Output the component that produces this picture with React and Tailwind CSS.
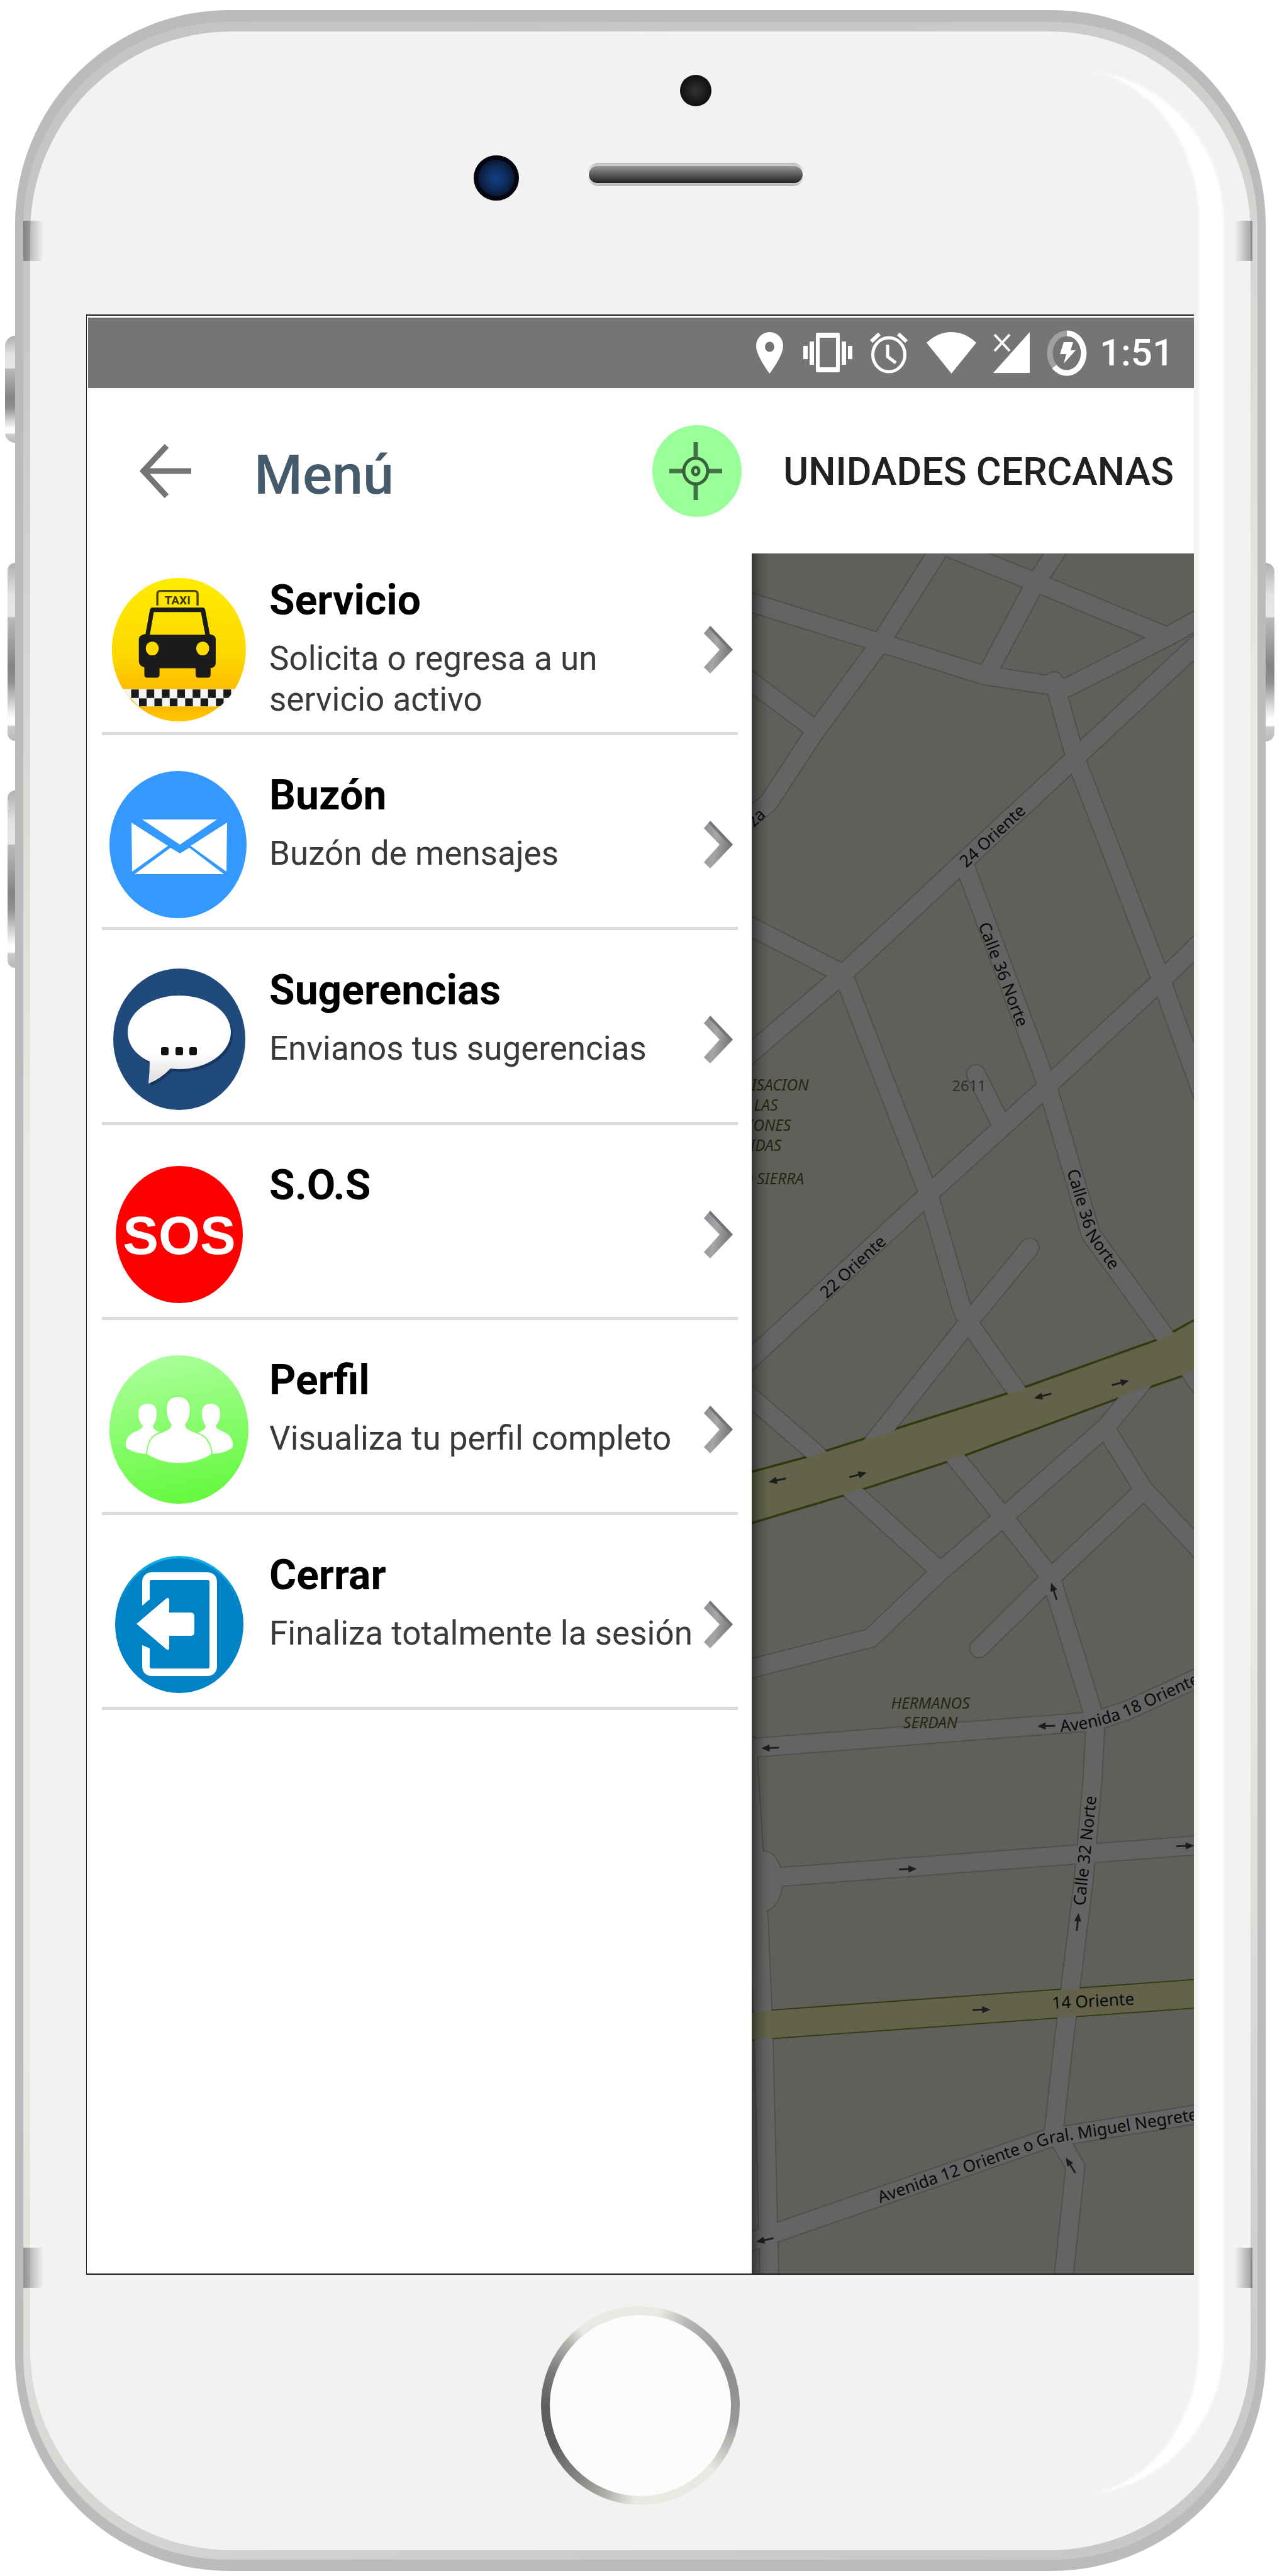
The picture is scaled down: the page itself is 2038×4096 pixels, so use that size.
import React from 'react';

const KEY_GRADIENT =
  'bg-[linear-gradient(180deg,#aeb1b0_0%,#e3e3e3_18%,#e7e7e8_30%,#b8babb_31%,#828485_58%,#8f908f_67%,#dededd_81%,#fdfdfb_87%,#fdfdfb_91%,#c9cccb_92%,#b8bab9_100%)]';

function SideKey({ className }) {
  return <span aria-hidden="true" className={`absolute ${KEY_GRADIENT} ${className}`} />;
}

/* ---------- status bar ---------- */

function PinIcon() {
  return (
    <svg width="48" height="66" viewBox="0 0 48 66" fill="#fff" fillRule="evenodd">
      <path d="M21.5 66C21.5 66 0 38 0 22A21.5 22 0 0 1 43 22C43 38 21.5 66 21.5 66ZM21.5 15.5a7.5 8 0 1 0 0 16a7.5 8 0 1 0 0-16Z" />
    </svg>
  );
}

function VibrateIcon() {
  return (
    <svg width="78" height="64" viewBox="0 0 78 64" fill="#fff">
      <rect x="0" y="21" width="7" height="21" />
      <rect x="10" y="14" width="7" height="37" />
      <path fillRule="evenodd" d="M22 0H56Q58 0 58 3V60Q58 63 56 63H22Q20 63 20 60V3Q20 0 22 0ZM26 8V55H52V8Z" />
      <rect x="61" y="14" width="7" height="37" />
      <rect x="71" y="21" width="7" height="21" />
    </svg>
  );
}

function AlarmIcon() {
  return (
    <svg width="64" height="66" viewBox="-2 0 64 66" fill="none" stroke="#fff">
      <ellipse cx="29" cy="36" rx="25.5" ry="27" strokeWidth="5" />
      <path d="M27 20V39L40 49" strokeWidth="5" />
      <path d="M1 15L14 3M44 3L57 15" strokeWidth="6" />
    </svg>
  );
}

function WifiIcon() {
  return (
    <svg width="79" height="66" viewBox="0 0 79 66" fill="#fff">
      <path d="M39.5 66L0 17Q18 0 39.5 0T79 17Z" />
    </svg>
  );
}

function SignalIcon() {
  return (
    <svg width="58" height="66" viewBox="0 0 58 66">
      <path d="M0 65L58 0V65Z" fill="#fff" />
      <path d="M0 2H28V30L24 38Z" fill="#757575" />
      <path d="M2 4L26 30M26 4L2 30" stroke="#fff" strokeWidth="4" />
    </svg>
  );
}

function BatteryIcon() {
  return (
    <svg width="64" height="73" viewBox="0 0 64 73" fill="none">
      <ellipse cx="32" cy="36.5" rx="27" ry="31.5" stroke="#a1a1a1" strokeWidth="9" />
      <path d="M32 5A27 31.5 0 1 1 12 58" stroke="#fff" strokeWidth="9" />
      <path d="M27 19H42L38 32H46L27 53L31 38H21Z" fill="#fff" />
    </svg>
  );
}

function StatusBar() {
  return (
    <div className="flex h-28 items-center justify-end gap-5 bg-[#757575] pr-8">
      <div className="flex items-center gap-[27px]">
        <PinIcon />
        <VibrateIcon />
        <AlarmIcon />
        <WifiIcon />
        <SignalIcon />
        <BatteryIcon />
      </div>
      <time className="text-[60px] leading-none font-medium text-white">1:51</time>
    </div>
  );
}

/* ---------- header ---------- */

function Header() {
  return (
    <header className="flex h-[263px] items-center bg-white pr-8 pl-[82px]">
      <button type="button" aria-label="Volver" className="shrink-0">
        <svg width="82" height="86" viewBox="0 0 82 86" fill="none" stroke="#757575" strokeWidth="9">
          <path d="M82 43H8M43 3L6 43L43 83" />
        </svg>
      </button>
      <h1 className="ml-[100px] pt-3 text-[88px] leading-none font-medium text-[#455a6b]">Menú</h1>
      <button type="button" className="ml-auto flex items-center gap-[66px] text-[#212121]">
        <svg width="142" height="146" viewBox="0 0 142 146" fill="none" stroke="#000" strokeOpacity="0.62">
          <ellipse cx="71" cy="73" rx="71" ry="73" fill="#99ff99" stroke="none" />
          <ellipse cx="69" cy="73" rx="19" ry="20.5" strokeWidth="5" />
          <path d="M27 73H48M90 73H111M69 27V50M69 96V119" strokeWidth="7" strokeOpacity="0.55" />
          <ellipse cx="69" cy="73" rx="5" ry="6" strokeWidth="5" />
        </svg>
        <span className="pt-1 text-[61px] leading-none font-medium">UNIDADES CERCANAS</span>
      </button>
    </header>
  );
}

/* ---------- menu icons ---------- */

function TaxiIcon() {
  const cells = [0, 1, 2, 3, 4, 5, 6];
  return (
    <svg width="220" height="236" viewBox="43 35 702 750">
      <defs>
        <linearGradient id="taxi-bg" x1="0" y1="0" x2="0" y2="1">
          <stop offset="0" stopColor="#ffec00" />
          <stop offset="0.55" stopColor="#fdd800" />
          <stop offset="0.78" stopColor="#fdbb00" />
          <stop offset="0.88" stopColor="#ffb400" />
          <stop offset="1" stopColor="#ffc800" />
        </linearGradient>
        <clipPath id="taxi-clip">
          <ellipse cx="395" cy="410" rx="340" ry="364" />
        </clipPath>
      </defs>
      <ellipse cx="395" cy="410" rx="340" ry="364" fill="url(#taxi-bg)" />
      <g clipPath="url(#taxi-clip)">
        <path d="M43 610H740V655H660V698H190L150 655H43Z" fill="#f4f4f4" />
        {cells.map((i) => (
          <rect key={`a${i}`} x={153 + i * 78} y="612" width="39" height="43" fill="#1a1a1a" />
        ))}
        {cells.slice(0, 6).map((i) => (
          <rect key={`b${i}`} x={193 + i * 78} y="657" width="39" height="40" fill="#1a1a1a" />
        ))}
      </g>
      <path d="M286 186V128Q286 112 302 112H474Q490 112 490 128V186" fill="none" stroke="#4e4a08" strokeWidth="11" />
      <text x="388" y="179" textAnchor="middle" fontFamily="Roboto, sans-serif" fontWeight="700" fontSize="61" fill="#3a3808">TAXI</text>
      <path
        fill="#1a1b1a"
        fillRule="evenodd"
        d="M262 196H516Q526 196 529 208L552 332Q582 336 582 356V480Q580 500 556 504V536Q556 552 542 552H494Q480 552 480 536V504H297V536Q297 552 283 552H234Q220 552 220 536V500Q194 494 192 470V356Q192 336 226 330L248 208Q251 196 262 196ZM268 219L248 334H529L507 219Z"
      />
      <ellipse cx="260" cy="404" rx="33" ry="35" fill="#fdda00" />
      <ellipse cx="516" cy="404" rx="33" ry="35" fill="#fdda00" />
    </svg>
  );
}

function MailIcon() {
  return (
    <svg width="220" height="236" viewBox="0 0 220 236">
      <ellipse cx="109" cy="118" rx="109" ry="117" fill="#3399ff" />
      <g fill="#fff">
        <path d="M52 78H171L112 118Z" />
        <path d="M35 83L93 120L36 161Z" />
        <path d="M187 83L129 120L186 161Z" />
        <path d="M40 165L97 123L112 132L127 123L182 165Z" />
      </g>
    </svg>
  );
}

function ChatIcon() {
  const bubble =
    'M111 48C157 48 193 74 193 106S157 165 111 165Q104 165 97 164Q82 180 62 188Q64 170 64 153C42 143 29 126 29 106C29 74 66 48 111 48Z';
  return (
    <svg width="220" height="236" viewBox="0 0 220 236">
      <defs>
        <linearGradient id="bubble" x1="0" y1="0" x2="0" y2="1">
          <stop offset="0.65" stopColor="#ffffff" />
          <stop offset="1" stopColor="#dcdcdc" />
        </linearGradient>
      </defs>
      <ellipse cx="111" cy="117.5" rx="105" ry="112.5" fill="#20497c" />
      <path d={bubble} transform="translate(3 4)" fill="#0d2445" opacity="0.5" />
      <path d={bubble} fill="url(#bubble)" />
      <g fill="#111">
        <rect x="82" y="130" width="12" height="13" rx="3" />
        <rect x="105" y="130" width="12" height="13" rx="3" />
        <rect x="127" y="130" width="12" height="13" rx="3" />
      </g>
    </svg>
  );
}

function SosIcon() {
  return (
    <svg width="220" height="236" viewBox="0 0 220 236">
      <ellipse cx="111" cy="118" rx="101" ry="109" fill="#ff0000" />
      <text x="111" y="149" textAnchor="middle" fontFamily="'Liberation Sans', sans-serif" fontWeight="700" fontSize="85" fill="#fff">SOS</text>
    </svg>
  );
}

function PeopleIcon() {
  return (
    <svg width="222" height="236" viewBox="0 0 222 236">
      <defs>
        <linearGradient id="people-bg" x1="0.4" y1="0" x2="0.6" y2="1">
          <stop offset="0" stopColor="#aaff99" />
          <stop offset="1" stopColor="#64f93e" />
        </linearGradient>
      </defs>
      <ellipse cx="110.5" cy="118" rx="110.5" ry="118" fill="url(#people-bg)" />
      <g fill="#fff">
        <path d="M61 77C71 77 75 83 75 92C75 102 72 107 69 112C69 117 74 120 83 124Q62 134 58 157Q40 156 28 148C23 144 27 132 32 127C38 121 52 119 53 112C49 107 46 102 46 92C46 83 51 77 61 77Z" />
        <path d="M161 77C171 77 176 83 176 92C176 102 173 107 169 112C170 119 184 121 190 127C195 132 199 144 194 148Q182 156 164 157Q160 134 139 124C148 120 153 117 153 112C150 107 147 102 147 92C147 83 151 77 161 77Z" />
      </g>
      <path
        d="M109 66C122 66 128 74 128 87C127 99 125 104 120 110C121 119 132 121 143 126C155 131 161 143 162 157Q140 171 111 171Q82 171 60 157C61 143 65 131 76 126C87 121 98 119 99 110C94 104 92 99 91 87C90 74 97 66 109 66Z"
        fill="#fff"
        stroke="#86fb69"
        strokeWidth="4"
        paintOrder="stroke"
      />
    </svg>
  );
}

function ExitIcon() {
  return (
    <svg width="220" height="236" viewBox="0 0 220 236">
      <defs>
        <linearGradient id="exit-edge" x1="0" y1="0" x2="0" y2="1">
          <stop offset="0" stopColor="#12b4e8" />
          <stop offset="0.35" stopColor="#0082c6" />
        </linearGradient>
      </defs>
      <ellipse cx="111" cy="118" rx="102" ry="109" fill="url(#exit-edge)" />
      <ellipse cx="111" cy="119" rx="99" ry="106" fill="#0082c6" />
      <path d="M58 88V51Q58 41 68 41H155Q165 41 165 51V184Q165 194 155 194H68Q58 194 58 184V146" fill="none" stroke="#fff" strokeWidth="12" />
      <path d="M50 90L64 78V92L50 102ZM50 134V150L64 156V144Z" fill="#0082c6" />
      <path d="M43 117L90 77Q95 74 95 80V99H129Q135 99 135 105V130Q135 136 129 136H95V154Q95 161 90 157Z" fill="#fff" />
    </svg>
  );
}

function Chevron() {
  return (
    <svg className="shrink-0" width="46" height="76" viewBox="0 0 46 76">
      <defs>
        <linearGradient id="chev" x1="0" y1="0" x2="1" y2="0.3">
          <stop offset="0" stopColor="#8c8c90" />
          <stop offset="0.5" stopColor="#a6a6a9" />
          <stop offset="1" stopColor="#77777a" />
        </linearGradient>
      </defs>
      <path d="M10 0L46 38L10 76L0 66L25 38L0 12Z" fill="url(#chev)" />
      <path d="M10 0L46 38L41 39L8 4Z" fill="#737376" />
    </svg>
  );
}

const ITEMS = [
  { title: 'Servicio', text: 'Solicita o regresa a un servicio activo', Icon: TaxiIcon },
  { title: 'Buzón', text: 'Buzón de mensajes', Icon: MailIcon },
  { title: 'Sugerencias', text: 'Envianos tus sugerencias', Icon: ChatIcon },
  { title: 'S.O.S', text: '', Icon: SosIcon },
  { title: 'Perfil', text: 'Visualiza tu perfil completo', Icon: PeopleIcon },
  { title: 'Cerrar', text: 'Finaliza totalmente la sesión', Icon: ExitIcon },
];

function Drawer() {
  return (
    <nav aria-label="Menú" className="w-[60%] shrink-0 bg-white px-[22px]">
      <ul>
        {ITEMS.map(({ title, text, Icon }) => (
          <li key={title} className="border-b-5 border-[#d9dadc] pt-14 pb-[13px] first:pt-[35px]">
            <button type="button" className="flex w-full items-center pr-2 pl-3 text-left">
              <span className="w-[220px] shrink-0">
                <Icon />
              </span>
              <span className="ml-[34px] flex min-w-0 flex-1 flex-col self-stretch">
                <span className="text-[66px] leading-[80px] font-bold text-black">{title}</span>
                <span className="mt-5 pr-2 text-[53px] leading-[65px] text-[#3a3a3a]">{text}</span>
              </span>
              <Chevron />
            </button>
          </li>
        ))}
      </ul>
    </nav>
  );
}

/* ---------- map ---------- */

const ROADS = [
  'M1240 1009L1475 1082L1660 1140L1798 1161L1968 1075L2030 1040',
  'M1592 915L1484 1086L1372 1239L1296 1355L1250 1392',
  'M1250 1138L1369 1227',
  'M1580 917L1738 980L1968 1075',
  'M1790 918L1745 986L1670 1127',
  'M2030 1077L1813 1279L1628 1451L1422 1643L1240 1799',
  'M1777 1150L1813 1279L1958 1654L2030 1854',
  'M1628 1463L1766 1832L1839 2081L1940 2220L2030 2346',
  'M2030 1584L1958 1654L1766 1832L1566 2014L1418 2151L1240 2316',
  'M1250 1555L1422 1643L1566 2014L1622 2207L1633 2230L1730 2368',
  'M1250 2342L1375 2450L1440 2517L1584 2648',
  'M1736 2104L1633 2230L1470 2436',
  'M1590 2432L1692 2558L1772 2660L1845 2895',
  'M1240 2820L1468 2762L1584 2651L1692 2558L1866 2405L1930 2326',
  'M1866 2412L1927 2510L2030 2621',
  'M1927 2514L1772 2660L1651 2779',
  'M1240 2949L1845 2902L1900 2884L2030 2824',
  'M1847 2904L1842 3000L1827 3171L1792 3454L1777 3591L1813 3652L1792 3850',
  'M1690 1900L1646 1812',
  'M1240 3170L2030 3110',
  'M1260 2940L1270 3100L1280 3240L1288 3437L1298 3850',
  'M1240 3788L1299 3767L1769 3604L2030 3562',
];

const ARROWS = [
  [1311, 2496, 168],
  [1447, 2487, -15],
  [1758, 2354, 165],
  [1889, 2332, -15],
  [1777, 2683, -108],
  [1764, 2910, 178],
  [1299, 2947, 178],
  [1998, 3112, -2],
  [1531, 3151, -2],
  [1817, 3240, -84],
  [1655, 3388, -2],
  [1805, 3650, -122],
  [1290, 3776, 168],
];

function MapView() {
  return (
    <svg
      role="img"
      aria-label="Mapa"
      className="absolute inset-0 h-full w-full"
      viewBox="1268 934 745 2899"
      preserveAspectRatio="xMidYMid slice"
      fontFamily="'Noto Sans', sans-serif"
      fontSize="28"
    >
      <defs>
        <linearGradient id="drawer-shadow" x1="0" y1="0" x2="1" y2="0">
          <stop offset="0" stopColor="#000" stopOpacity="0.45" />
          <stop offset="0.5" stopColor="#000" stopOpacity="0.14" />
          <stop offset="1" stopColor="#000" stopOpacity="0" />
        </linearGradient>
        <path id="p-36" d="M1760 1847L1832 2086L1933 2226L2024 2352" />
        <path id="p-18" d="M1788 2920Q1850 2915 1903 2893L2070 2817" />
        <path id="p-12" d="M1484 3714L1772 3613L2110 3559" />
      </defs>
      <rect x="1268" y="934" width="745" height="2899" fill="#605f5a" />
      <g fill="none" strokeLinejoin="round" strokeLinecap="round">
        <g stroke="#4f4f4d" strokeWidth="34">
          {ROADS.map((d) => (
            <path key={d} d={d} />
          ))}
          <ellipse cx="1286" cy="3171" rx="18" ry="35" />
        </g>
        <g strokeLinecap="butt">
          <path d="M1268 2482L1360 2457L1698 2350L1949 2260L1974 2248L2030 2217V2300L2000 2318L1939 2339L1880 2360L1600 2464L1425 2521L1268 2568Z" fill="#62634a" stroke="#333a0e" strokeWidth="4" />
          <path d="M1240 3417L2030 3360" stroke="#333a0e" strokeWidth="50" />
        </g>
        <g stroke="#646464" strokeWidth="30">
          {ROADS.map((d) => (
            <path key={d} d={d} />
          ))}
          <ellipse cx="1286" cy="3171" rx="18" ry="35" fill="#646464" />
        </g>
        <path d="M1268 2484L1360 2459L1698 2352L1949 2262L1974 2250L2030 2219V2298L2000 2316L1939 2337L1880 2358L1600 2462L1425 2519L1268 2566Z" fill="#62634a" />
        <path d="M1240 3417L2030 3360" stroke="#62634a" strokeWidth="46" strokeLinecap="butt" />
      </g>
      <g fill="#1d1d1d" stroke="#1d1d1d">
        {ARROWS.map(([x, y, a]) => (
          <g key={`${x}-${y}`} transform={`translate(${x} ${y}) rotate(${a})`}>
            <path d="M-15 0H6" strokeWidth="3" fill="none" />
            <path d="M15 0L1 -6V6Z" stroke="none" />
          </g>
        ))}
      </g>
      <g fill="#0a0a0a" textAnchor="middle">
        <text transform="translate(1674 1411) rotate(-43)" dy="9">24 Oriente</text>
        <text transform="translate(1691 1644) rotate(69)" dy="9">Calle 36 Norte</text>
        <text transform="translate(1439 2137) rotate(-43)" dy="9">22 Oriente</text>
        <text transform="translate(1830 3120) rotate(-84)" dy="9">Calle 32 Norte</text>
        <text transform="translate(1843 3374) rotate(-3)" dy="9">14 Oriente</text>
        <text transform="translate(1276 1380) rotate(-43)" dy="9">za</text>
      </g>
      <g fill="#0a0a0a">
        <text>
          <textPath href="#p-36" startOffset="134">Calle 36 Norte</textPath>
        </text>
        <text>
          <textPath href="#p-18">Avenida 18 Oriente</textPath>
        </text>
        <text>
          <textPath href="#p-12">Avenida 12 Oriente o Gral. Miguel Negrete</textPath>
        </text>
      </g>
      <text x="1634" y="1841" textAnchor="middle" fontSize="25" fill="#2f2f2d">2611</text>
      <g fill="#25270f" fontStyle="italic" fontSize="26">
        <g textAnchor="end">
          <text x="1364" y="1840">ISACION</text>
          <text x="1312" y="1873">LAS</text>
          <text x="1334" y="1907">IONES</text>
          <text x="1318" y="1941">IDAS</text>
          <text x="1356" y="1997">O SIERRA</text>
        </g>
        <g textAnchor="middle">
          <text x="1569" y="2881">HERMANOS</text>
          <text x="1569" y="2914">SERDAN</text>
        </g>
      </g>
      <rect x="1268" y="934" width="28" height="2899" fill="url(#drawer-shadow)" />
    </svg>
  );
}

/* ---------- phone ---------- */

function TopBezel() {
  return (
    <div className="grid grid-cols-[72px_346px] items-center justify-center gap-x-[108px] gap-y-[78px] pt-[69px] pr-1 pb-[181px]">
      <span className="col-start-2 h-[50px] w-[50px] justify-self-center rounded-full bg-[radial-gradient(circle,#333333_0%,#1a191b_50%,#040308_95%)]" />
      <span className="h-[72px] w-[72px] rounded-full border-[7px] border-[#04050f] bg-[radial-gradient(circle,#12408a_0%,#0f2a57_45%,#02020a_100%)]" />
      <span className="mb-3 h-[37px] rounded-full bg-[linear-gradient(180deg,#b9bbbd,#d8d8d8_20%,#ffffff_50%,#d8d8d8_80%,#b3b5b6)] px-[3px] py-[5px]">
        <span className="block h-full rounded-full bg-[linear-gradient(180deg,#989898,#5c5b5b_50%,#231f20)]" />
      </span>
    </div>
  );
}

export default function App() {
  return (
    <main className="flex min-h-screen bg-white pt-4 pr-[26px] pb-2 pl-6 font-[Roboto,sans-serif]">
      <div className="relative flex flex-1 rounded-[340px] bg-[#babbbd] px-[13px] pt-[19px] pb-[18px]">
        <SideKey className="top-[518px] -left-4 h-[170px] w-4 rounded-l-[26px]" />
        <SideKey className="top-[879px] -left-3 h-[283px] w-3 rounded-l-[30px]" />
        <SideKey className="top-[1241px] -left-3 h-[282px] w-3 rounded-l-[30px]" />
        <SideKey className="top-[879px] -right-3.5 h-[284px] w-3.5 rounded-r-[30px]" />

        <div className="relative flex flex-1 rounded-[326px] bg-[linear-gradient(160deg,#c2c5c4_0%,#c6c8c6_10%,#e8e9e1_38%,#e8e9e1_68%,#c9cbca_94%,#c6c8c7_100%)] px-[11px] py-[15px]">
          <div className="relative flex flex-1 flex-col rounded-[320px] bg-[#f2f2f2] pr-[90px] pl-[89px]">
            {/* gloss along the right edge of the glass */}
            <span
              aria-hidden="true"
              className="absolute top-[61px] right-[43px] bottom-[87px] w-[270px] rounded-r-[240px] border-r-[39px] border-white blur-[2px]"
            />
            <TopBezel />

            <section className="relative flex flex-1 flex-col border-t-2 border-b-2 border-l border-[#1b1b22] bg-white pt-[3px] pl-[2px]">
              <StatusBar />
              <Header />
              <div className="flex flex-1">
                <Drawer />
                <div className="relative flex-1 overflow-hidden bg-[#605f5a]">
                  <MapView />
                </div>
              </div>
            </section>

            <button
              type="button"
              aria-label="Inicio"
              className="mt-[50px] mb-[72px] h-[316px] w-[316px] self-center rounded-full bg-[conic-gradient(#e8e9e2_0deg,#e8e9e2_12deg,#b5b5b4_30deg,#8c8c8b_66deg,#999998_100deg,#c2c2be_117deg,#e8e9e1_132deg,#e8e9e1_183deg,#a8a8a4_204deg,#888886_219deg,#5e5e5e_246deg,#5e5e5e_268deg,#7a7a79_291deg,#b0b0ac_310deg,#e8e9e2_322deg,#e8e9e2_360deg)] p-[14px]"
            >
              <span className="block h-full w-full rounded-full bg-[#fafcfb]" />
            </button>
          </div>

          <span aria-hidden="true" className="absolute top-[316px] left-0 h-16 w-8 bg-linear-to-r from-black/35 to-transparent" />
          <span aria-hidden="true" className="absolute top-[316px] right-2 h-16 w-7 bg-linear-to-l from-black/35 to-transparent" />
          <span aria-hidden="true" className="absolute bottom-[432px] left-0 h-16 w-8 bg-linear-to-r from-black/35 to-transparent" />
          <span aria-hidden="true" className="absolute right-2 bottom-[432px] h-16 w-7 bg-linear-to-l from-black/35 to-transparent" />
        </div>
      </div>
    </main>
  );
}
